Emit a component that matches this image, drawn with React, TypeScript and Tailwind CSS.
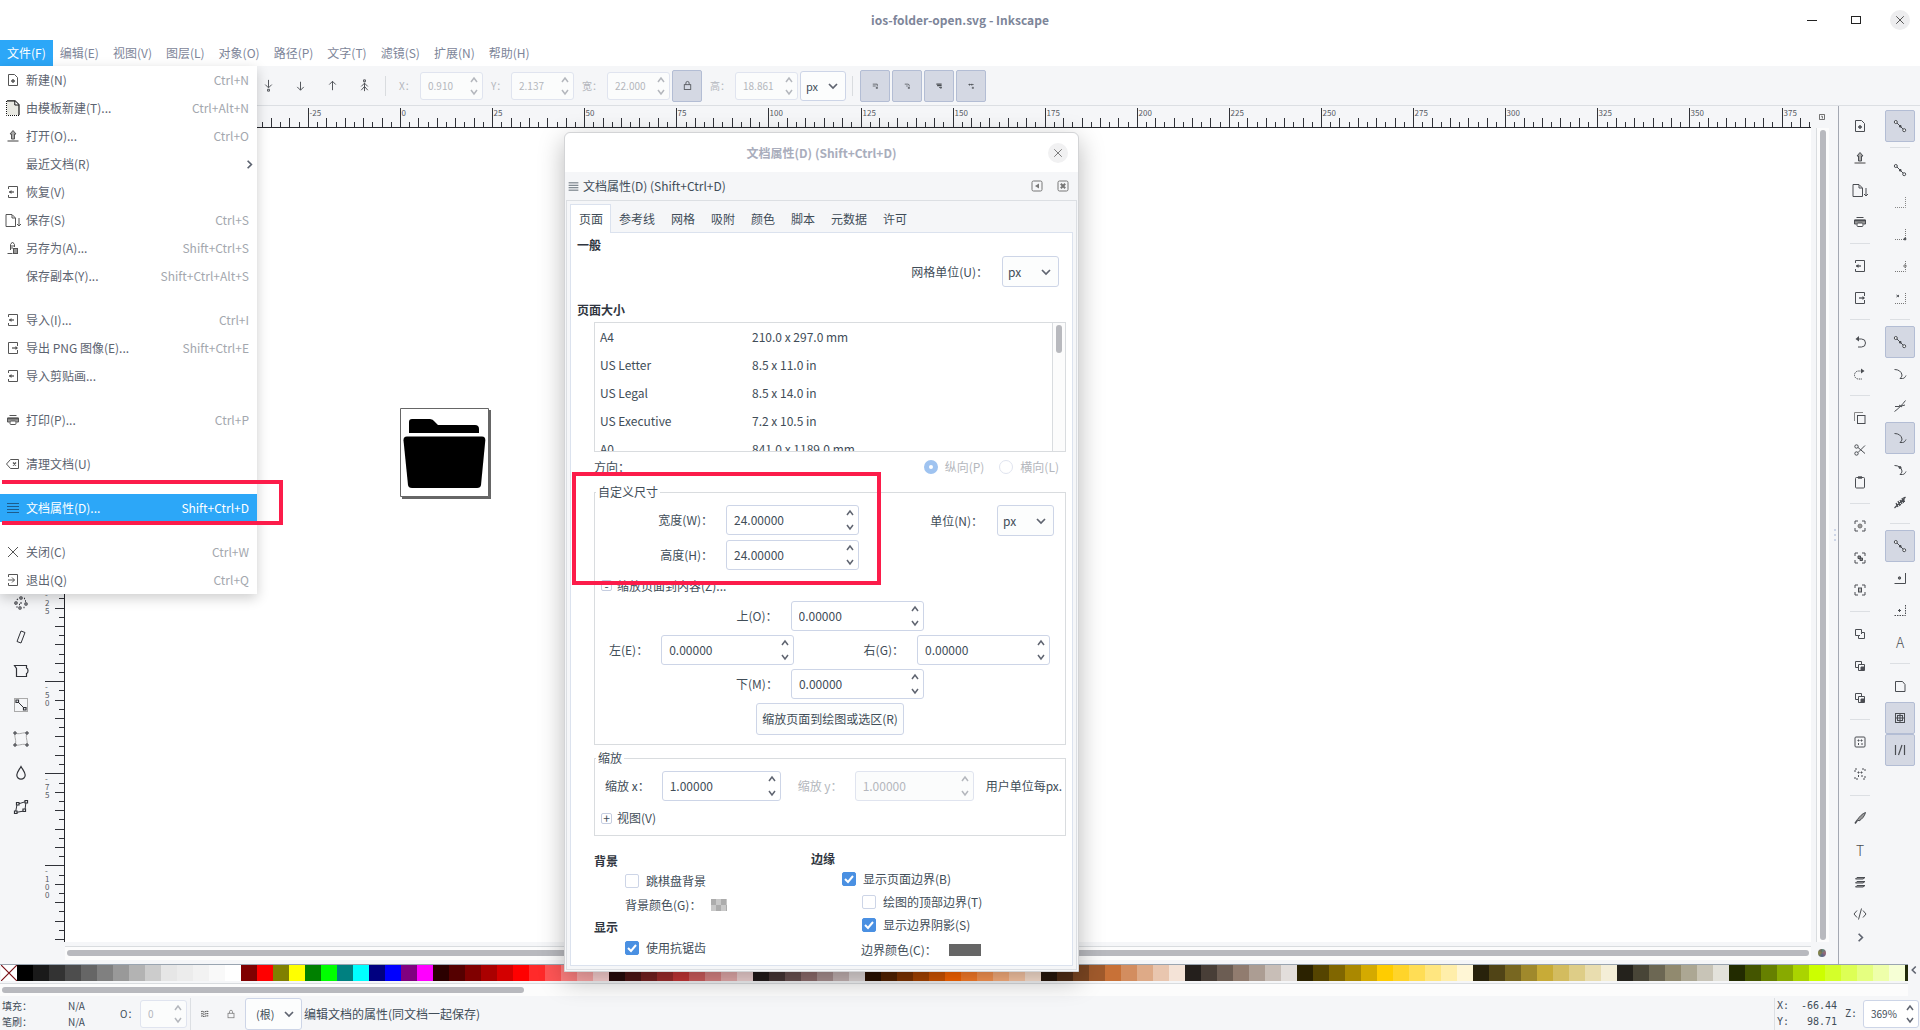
import React from "react";

import { clsx } from 'clsx';

type IconProps = { name: string; className?: string };

// all glyphs live on a 16x16 grid and inherit the text colour
const icons: Record<string, React.ReactNode> = {
    newDoc: <><path d="M3.5 2.5h6l3 3v8h-9z" /><path d="M8 7v4M6 9h4" strokeWidth="1.4" /></>,
    template: <><path d="M2 1h8l4 4v10H2z" fill="#e9e9e2" stroke="none" /><path d="M2 .8h8l4 4V15" stroke="#111" strokeWidth="1.2" /><path d="M9.8 1v4h4" fill="#fff" stroke="#111" /><path d="M1.5 1v14.500h13" stroke="#111" strokeDasharray="1 1" /></>,
    open: <><path d="M8 2.5l3 3.5H9.5v5h-3V6H5z" fill="#aaa" /><path d="M2.5 13h11" strokeWidth="1.6" stroke="#888" /></>,
    save: <><path d="M1 2.5h6l3.5 3.5v8.5H1z" /><path d="M7 3v3h3M14 6v8M12 12l2 2 2-2" /></>,
    saveAs: <><path d="M7.5 2l-2 2.5V10M7.5 2l2 2.5V7M2.5 13.5h5" /><rect x="8.5" y="8.5" width="4" height="5" fill="#999" /><path d="M6 6h3M6 8h2" /></>,
    print: <><path d="M4.5 3.5h7" /><path d="M4.5 10h-2V6h11v4h-2" fill="#999" /><path d="M2.5 6.5h11" strokeWidth="1.6" /><rect x="5" y="9" width="6" height="3.5" rx="1" fill="#fff" /></>,
    importIn: <><path d="M3.5 5V2.5h9v11h-9V11" /><path d="M4 8h5" strokeWidth="1.3" /><path d="M6.5 6L4 8l2.5 2z" fill="currentColor" stroke="none" /></>,
    exportOut: <><path d="M12.5 6V2.5h-9v11h9V10" /><path d="M7 8h5" strokeWidth="1.3" /><path d="M10.500 6l2.500 2-2.500 2z" fill="currentColor" stroke="none" /></>,
    clean: <><path d="M5.5 3.5h8v9h-8L1.500 8z" /><path d="M8 6.5l3 3M11 6.5l-3 3" strokeWidth="1.3" /></>,
    lines: <path d="M2 3.5h12M2 6.5h12M2 9.5h12M2 12.5h12" />,
    close: <path d="M3 3l10 10M13 3L3 13" />,
    quit: <><path d="M3.5 5V2.5h9v11h-9V11" /><path d="M3 8h6.500M7 5.500L9.500 8 7 10.500" /></>,
    undo: <><path d="M6 5h3.500a4 4 0 0 1 0 8H6" /><path d="M7 2L3.500 5 7 7.500z" fill="currentColor" stroke="none" /></>,
    redo: <><path d="M10 5H6.500a4 4 0 0 0 0 8H10" strokeDasharray="1.5 .8" /><path d="M9 2.500L12.500 5 9 7.500z" fill="currentColor" stroke="none" /></>,
    copy: <><path d="M2.5 11V2.5H11" stroke="#888" /><rect x="5.5" y="5.5" width="7.5" height="8" /></>,
    cut: <><circle cx="4.5" cy="4.5" r="1.7" /><circle cx="4.5" cy="11.5" r="1.7" /><path d="M6 5.5l7 6M6 10.5l7-7" /></>,
    paste: <><rect x="3.5" y="3.5" width="9" height="10.5" rx="1" /><path d="M6 3.5h4" strokeWidth="2.4" /></>,
    zoomSel: <><path d="M3 6V3h3M10 3h3v3M13 10v3h-3M6 13H3v-3" /><circle cx="8" cy="8" r="2" fill="#999" stroke="#777" /></>,
    zoomDraw: <><path d="M3 6V3h3M10 3h3v3M13 10v3h-3M6 13H3v-3" /><path d="M6 6h2.5v2.5H6zM8 8h2.5v2.5H8z" fill="#888" /></>,
    zoomPage: <><path d="M3 6V3h3M10 3h3v3M13 10v3h-3M6 13H3v-3" /><rect x="6.5" y="6" width="3" height="4" fill="#bbb" /></>,
    duplicate: <path d="M3.5 3.5h6v3h3v6h-6v-3h-3zM9.5 6.5v1.500M6.500 9.500h1.500" />,
    clone: <><path d="M9.5 6V3.5h-6v6H6" /><path d="M6.5 6.5h6v6h-6z" /><path d="M9 9h3v3H9z" fill="currentColor" /></>,
    group: <><rect x="3" y="3" width="10" height="10" rx="1" /><path d="M6 6h1v1H6zM9 6h1v1H9zM6.500 9v2M9 10h2" /></>,
    ungroup: <><path d="M3 6V3h3M10 3h3v3M13 10v3h-3M6 13H3v-3" strokeDasharray="2 1" /><path d="M6 6h1v1H6zM9 6h1v1H9zM6.500 9v2M9 10h2" /></>,
    pen: <><path d="M13.5 2.5c-3 1-6 4-8 7L7 11c3-2 5.500-4.500 6.500-8.500z" fill="#999" /><path d="M5.5 10L3 13.500" strokeWidth="1.6" /></>,
    layers: <path d="M5 3.5h8l-2 1.5H3.500zM5 7.500h8l-2 1.500H3.500zM5 11.500h8l-2 1.500H3.500z" fill="#aaa" />,
    code: <path d="M5 4.500L2 8l3 3.500M11 4.500L14 8l-3 3.500M9.500 2.500l-3 11" />,
    chevronRight: <path d="M6 4l4 4-4 4" strokeWidth="1.8" />,
    chevronLeft: <path d="M10 4L6 8l4 4" strokeWidth="1.8" />,
    snap: <><path d="M4 4l8 8" /><circle cx="3.8" cy="4" r="1.5" fill="#f5f6f8" /><circle cx="12.2" cy="12.2" r="1.5" fill="#f5f6f8" /><path d="M7.500 7.500H9V9H7.500z" fill="currentColor" /></>,
    snapEdge: <path d="M13.5 3v10.500H2.500" strokeDasharray="1 1" stroke="#888" />,
    snapCorner: <><path d="M13.5 3v10.500H2.500" strokeDasharray="1 1" stroke="#777" /><circle cx="13" cy="13" r="1" fill="currentColor" /></>,
    snapMid: <><path d="M13.5 3v10.500H2.500" strokeDasharray="1 1" stroke="#777" /><circle cx="13" cy="8" r="1.2" stroke="#777" /></>,
    snapCenter: <><path d="M13.5 3v10.500H2.500" strokeDasharray="1 1" stroke="#777" /><path d="M4.500 5l2.500 2M7 5L4.500 7" /></>,
    snapPath: <path d="M2.5 3.5c4 0 7 2 7.5 5.5 0 1.5-1 2.5-2 3.500h2.500c2 0 3-2 3.500-3" />,
    snapCross: <path d="M2.5 13.500c3-2 8-7 11-11M3 8.500h4.500L13 7M7 7l3 2" />,
    snapSmooth: <><path d="M2.5 3.5c4 0 7 2 7.5 5.5 0 1.5-1 2.5-2 3.500h2.500c2 0 3-2 3.500-3" /><circle cx="8" cy="5.5" r="1" fill="currentColor" /></>,
    snapHatch: <path d="M2.5 14l11-11M4 9l2 4M6 7l2 5M8 6l2 4M10 4l1.500 5M12 3v4M4 10.500h5M8 7.500h5" strokeWidth="1.2" />,
    snapObj: <><path d="M13.5 3v10.500H2.500" /><circle cx="7.5" cy="8" r="1.2" fill="#777" /></>,
    snapRot: <><path d="M13.5 3v10.500H2.500" strokeDasharray="1.5 1" /><path d="M7.500 7v3M6 8.500h3" /></>,
    snapPage: <path d="M3.5 3.5h7l2.500 3v7H3.500z" />,
    snapGrid: <path d="M3.5 3v10M8 3v10M12.500 3v10M3 3.500h10M3 8h10M3 12.500h10M5.500 5v6M10.500 5v6M5 5.500h6M5 10.500h6" />,
    snapGuide: <path d="M3.5 3v10M12.500 3v10M10 3L6.500 13" strokeWidth="1.2" />,
    lower: <path d="M8 2v8M4.500 7L8 10.500 11.500 7M7 12h2v2H7z" />,
    down: <path d="M8 4v9M4.500 9.500L8 13l3.500-3.500" />,
    up: <path d="M8 13V3.500M4.500 7L8 3.500 11.500 7" />,
    raise: <path d="M8 14V5M4.500 9L8 5.500 11.500 9M7 2h2v2H7zM4.500 13L8 9l3.500 4" />,
    lock: <><rect x="4" y="7" width="8" height="6" /><path d="M6 7V5a2 2 0 0 1 4 0v2" /></>,
    affectA: <path d="M5 5.5h6v3M5 8h4M9 10.500h3M10.500 9v3" />,
    affectB: <path d="M5 5.5h4a2 2 0 0 1 2 2v1M7 8h2M9 10.500h3M10.500 9v3" />,
    affectC: <><path d="M4.5 5.500h7M5.500 7.500h6" strokeWidth="1.8" /><path d="M8 10h4M10.500 9v3" /></>,
    affectD: <path d="M4.500 6h7M6 5v2.500M9 5v2.500M9 10.500h3M10.500 9v3" />,
    spray: <g strokeWidth="1.1"><circle cx="8" cy="3" r="1.2" /><circle cx="3" cy="8" r="1.2" /><circle cx="13" cy="9" r="1.2" /><circle cx="7" cy="13" r="1.2" /><path d="M4 4l.8.8M11 3.500h1M12 6h1M7.500 7.500l1 1M4 11.500v1M10.500 12.500h1M6 9.500h1" strokeWidth="1.5" /></g>,
    eraser: <path d="M8 2l4 1.500-4 10.500-4-1.500z" />,
    bucket: <path d="M1.500 2.500h12v2.500c2 .5 2 5 0 5.500v3h-10V5.500z" strokeWidth="1.2" />,
    gradient: <><rect x="1.5" y="1.5" width="13" height="13" stroke="#aaa" /><path d="M4 4l8 8" /><path d="M3 3h2.500v2.500H3zM10.500 10.500H13V13h-2.500z" fill="#f5f6f8" strokeWidth="1.2" /></>,
    mesh: <><path d="M2 2c4 2 8-1 12 0-2 4 1 8 0 12-4-2-8 1-12 0 2-4-1-8 0-12z" stroke="#aaa" /><path d="M1 1h2v2H1zM13 1h2v2h-2zM1 13h2v2H1zM13 13h2v2h-2z" fill="#f5f6f8" /></>,
    drop: <path d="M8 1.500C6 5 3.800 7.500 3.800 10a4.200 4.200 0 0 0 8.400 0C12.200 7.500 10 5 8 1.500z" strokeWidth="1.2" />,
    connector: <><path d="M4 5.500L2.500 13.500 11 12M5 5l8-2.500L12 11" /><path d="M3.500 3.500H6V6H3.500zM12 1.500h2.500V4H12zM1.500 12H4v2.500H1.500zM10 10h2.500v2.500H10z" fill="#f5f6f8" strokeWidth="1.2" /></>,
    layerEye: <path d="M3 5c2-1.500 3 1 5 0s3-1 5 0M3 8c2-1.500 3 1 5 0s3-1 5 0M3 11c2-1.500 3 1 5 0s3-1 5 0" strokeWidth="1.4" strokeDasharray="2 .6" />,
    dockLeft: <><rect x="3" y="3" width="10" height="10" rx="1.5" /><path d="M10 5.500v5L6 8z" fill="currentColor" stroke="none" /></>,
    dockClose: <><rect x="3" y="3" width="10" height="10" rx="1.5" /><path d="M5.800 5.800l4.400 4.400M10.200 5.800l-4.400 4.400" strokeWidth="2" /></>,
};

const Icon: React.FC<IconProps> = ({ name, className }) => (
    <svg viewBox="0 0 16 16" fill="none" stroke="currentColor" className={clsx('shrink-0', className || 'size-4')} aria-hidden="true">
        {icons[name]}
    </svg>
);

const Arrows: React.FC<{ label: string; disabled?: boolean }> = ({ label, disabled }) => (
    <span className={clsx('flex w-3 shrink-0 flex-col justify-between py-[3px]', disabled ? 'text-[#b4b7bd]' : 'text-[#5f6470]')}>
        <button type="button" aria-label={`${label} +`} disabled={disabled}>
            <svg viewBox="0 0 8 8" className="size-2" fill="none" stroke="currentColor" strokeWidth="1.5"><path d="M1 6l3-4 3 4" /></svg>
        </button>
        <button type="button" aria-label={`${label} -`} disabled={disabled}>
            <svg viewBox="0 0 8 8" className="size-2" fill="none" stroke="currentColor" strokeWidth="1.5"><path d="M1 2l3 4 3-4" /></svg>
        </button>
    </span>
);

type SpinProps = { id: string; label: string; value: string; className: string; disabled?: boolean };

const Spin: React.FC<SpinProps> = ({ id, label, value, className, disabled }) => (
    <span className={clsx('flex shrink-0 rounded-[3px] border', disabled ? 'border-[#e0e4ef] bg-[#fbfcfc] text-[#b4b7bd]' : 'border-[#cdd5e7] bg-white text-[#414d58]', className)}>
        <input id={id} type="text" defaultValue={value} disabled={disabled} className="w-full min-w-0 flex-1 bg-transparent pl-[7px] outline-none" />
        <Arrows label={label} disabled={disabled} />
    </span>
);

const Select: React.FC<{ id: string; label?: string; value: string; className: string; pad?: string }> = ({ id, label, value, className, pad }) => (
    <span className={clsx('relative flex shrink-0', className)}>
        <select id={id} aria-label={label} className={clsx('w-full appearance-none rounded-[3px] border border-[#cdd5e7] bg-[#fcfdfd] text-[#414d58] outline-none', pad || 'pl-[5px]')}>
            <option>{value}</option>
        </select>
        <svg viewBox="0 0 10 10" className="pointer-events-none absolute inset-y-0 right-2 my-auto size-[10px] text-[#5f6470]" fill="none" stroke="currentColor" strokeWidth="1.7"><path d="M1 3l4 4 4-4" /></svg>
    </span>
);

const Check: React.FC<{ id: string; label: string; checked?: boolean }> = ({ id, label, checked }) => (
    <span className="flex items-center">
        <span className="relative flex">
            <input id={id} type="checkbox" defaultChecked={checked} className="size-[14px] appearance-none rounded-[2px] border border-[#cdd5e7] bg-white checked:border-[#4a90e2] checked:bg-[#4a90e2]" />
            {checked && <svg viewBox="0 0 14 14" className="pointer-events-none absolute inset-0 size-[14px]" fill="none" stroke="#fff" strokeWidth="2"><path d="M3 7l3 3 5-6" /></svg>}
        </span>
        <label htmlFor={id} className="pl-[7px]">{label}</label>
    </span>
);

const menus = ['文件(F)', '编辑(E)', '视图(V)', '图层(L)', '对象(O)', '路径(P)', '文字(T)', '滤镜(S)', '扩展(N)', '帮助(H)'];

const fileMenu: { icon?: string; text: string; keys?: string; active?: boolean; sub?: boolean }[][] = [
    [
        { icon: 'newDoc', text: '新建(N)', keys: 'Ctrl+N' },
        { icon: 'template', text: '由模板新建(T)...', keys: 'Ctrl+Alt+N' },
        { icon: 'open', text: '打开(O)...', keys: 'Ctrl+O' },
        { text: '最近文档(R)', sub: true },
        { icon: 'importIn', text: '恢复(V)' },
        { icon: 'save', text: '保存(S)', keys: 'Ctrl+S' },
        { icon: 'saveAs', text: '另存为(A)...', keys: 'Shift+Ctrl+S' },
        { text: '保存副本(Y)...', keys: 'Shift+Ctrl+Alt+S' },
    ],
    [
        { icon: 'importIn', text: '导入(I)...', keys: 'Ctrl+I' },
        { icon: 'exportOut', text: '导出 PNG 图像(E)...', keys: 'Shift+Ctrl+E' },
        { icon: 'importIn', text: '导入剪贴画...' },
    ],
    [{ icon: 'print', text: '打印(P)...', keys: 'Ctrl+P' }],
    [{ icon: 'clean', text: '清理文档(U)' }],
    [{ icon: 'lines', text: '文档属性(D)...', keys: 'Shift+Ctrl+D', active: true }],
    [
        { icon: 'close', text: '关闭(C)', keys: 'Ctrl+W' },
        { icon: 'quit', text: '退出(Q)', keys: 'Ctrl+Q' },
    ],
];

const FileMenu: React.FC = () => (
    <div role="menu" className="absolute top-full left-0 z-20 flex w-[257px] flex-col gap-4 bg-white shadow-[0_4px_12px_rgba(0,0,0,0.2)]">
        {fileMenu.map((group, i) => (
            <div key={i}>
                {group.map((item) => (
                    <button
                        key={item.text}
                        type="button"
                        role="menuitem"
                        className={clsx('flex h-7 w-full items-center pr-2 pl-[5px]', item.active ? 'bg-[#2ca7f8] text-white' : 'text-[#5c6370]')}
                    >
                        <span className={clsx('w-[21px]', item.active ? 'text-[#1d5c8c]' : 'text-[#555]')}>
                            {item.icon && <Icon name={item.icon} />}
                        </span>
                        <span>{item.text}</span>
                        {item.keys && <span className={clsx('ml-auto', item.active ? 'text-white' : 'text-[#a3a7ae]')}>{item.keys}</span>}
                        {item.sub && <Icon name="chevronRight" className="-mr-2 ml-auto size-[15px]" />}
                    </button>
                ))}
            </div>
        ))}
    </div>
);

// one ruler tick is 2.5 user units
const STEP = 9.21;

const range = (from: number, to: number) => Array.from({ length: to - from + 1 }, (_, i) => from + i);

const TopRuler: React.FC = () => (
    <svg className="h-[22px] w-full" aria-label="水平标尺">
        {range(-16, 153).map((n) => {
            const x = Math.round(359 + n * STEP) + 0.5;
            const top = n % 10 === 0 ? 2 : n % 2 === 0 ? 12 : 16;
            return (
                <g key={n}>
                    <path d={`M${x} ${top}V21`} stroke="#303238" />
                    {n % 10 === 0 && <text x={x + 1} y="10" fill="#555a63" className="text-[8px]">{n * 2.5}</text>}
                </g>
            );
        })}
        <path d="M0 21.5H4000" stroke="#25272c" />
    </svg>
);

const SideRuler: React.FC = () => (
    <svg className="h-full w-6 shrink-0" aria-label="垂直标尺">
        {range(8, 48).map((n) => {
            const y = Math.round(369 + n * STEP) + 0.5;
            const left = n % 10 === 0 ? 4 : n % 2 === 0 ? 14 : 18;
            const label = n % 10 === 0 ? String(n * -2.5) : '';
            return (
                <g key={n}>
                    <path d={`M${left} ${y}H23`} stroke="#303238" />
                    {label.split('').map((c, i) => (
                        <text key={i} x="4" y={y + 8 + i * 8} fill="#555a63" className="text-[8px]">{c}</text>
                    ))}
                </g>
            );
        })}
        <path d="M23.5 0V4000" stroke="#25272c" />
    </svg>
);

const palette = (
    '000000 1a1a1a 333333 4d4d4d 666666 808080 999999 b3b3b3 cccccc e6e6e6 ececec f2f2f2 f9f9f9 ffffff ' +
    '800000 ff0000 808000 ffff00 008000 00ff00 008080 00ffff 000080 0000ff 800080 ff00ff ' +
    '2b0000 550000 800000 aa0000 d40000 ff0000 ff2a2a ff5555 ff8080 ffaaaa ffd5d5 ' +
    '280b0b 501616 782121 a02c2c c83737 d35f5f de8787 e9afaf f4d7d7 ' +
    '241c1c 483737 6c5353 916f6f ac9393 c8b7b7 e3dbdb ' +
    '2b1100 552200 803300 aa4400 d45500 ff6600 ff7f2a ff9955 ffb380 ffccaa ffe6d5 ' +
    '28170b 502d16 784421 a05a2c c87137 d38d5f deaa87 e9c6af f4e3d7 ' +
    '241f1c 483e37 6c5d53 917c6f ac9d93 c8beb7 e3dedb ' +
    '2b2200 554400 806600 aa8800 d4aa00 ffcc00 ffd42a ffdd55 ffe680 ffeeaa fff6d5 ' +
    '28220b 504416 786721 a0892c c8ab37 d3bc5f decd87 e9ddaf f4eed7 ' +
    '24221c 484537 6c6753 918a6f aca793 c8c4b7 e3e2db ' +
    '222b00 445500 668000 88aa00 aad400 ccff00 d4ff2a ddff55 e5ff80 eeffaa f6ffd5 222b0b'
).split(' ');

const commands = [
    ['newDoc', 'open', 'save', 'print'],
    ['importIn', 'exportOut'],
    ['undo', 'redo'],
    ['copy', 'cut', 'paste'],
    ['zoomSel', 'zoomDraw', 'zoomPage'],
    ['duplicate', 'clone', 'clone'],
    ['group', 'ungroup'],
    ['pen', 'T', 'layers', 'code'],
];

// a leading * marks a switched-on snap option
const snaps = [
    ['*snap'],
    ['snap', 'snapEdge', 'snapCorner', 'snapMid', 'snapCenter'],
    ['*snap', 'snapPath', 'snapCross', '*snapPath', 'snapSmooth', 'snapHatch'],
    ['*snap', 'snapObj', 'snapRot', 'A'],
    ['snapPage', '*snapGrid', '*snapGuide'],
];

const ToolColumn: React.FC<{ groups: string[][]; label: string }> = ({ groups, label }) => (
    <div role="toolbar" aria-label={label} className="flex w-[30px] flex-col text-[#4a4d52]">
        {groups.map((group, i) => (
            <React.Fragment key={i}>
                {i > 0 && <div className="mx-[5px] my-[5px] h-[2px] shrink-0 border-t border-[#dcdfe3]" />}
                {group.map((entry, k) => {
                    const on = entry.startsWith('*');
                    const name = entry.replace('*', '');
                    return (
                        <button
                            key={k}
                            type="button"
                            aria-label={name}
                            className={clsx('flex h-8 shrink-0 items-center justify-center rounded-[2px] border', on ? 'border-[#b3bdd4] bg-[#d4d8e3]' : 'border-transparent')}
                        >
                            {name.length === 1 ? <span className="text-[14px] font-light">{name}</span> : <Icon name={name} />}
                        </button>
                    );
                })}
            </React.Fragment>
        ))}
    </div>
);

const pageSizes = [
    ['A4', '210.0 x 297.0 mm'],
    ['US Letter', '8.5 x 11.0 in'],
    ['US Legal', '8.5 x 14.0 in'],
    ['US Executive', '7.2 x 10.5 in'],
    ['A0', '841.0 x 1189.0 mm'],
];

const tabs = ['参考线', '网格', '吸附', '颜色', '脚本', '元数据', '许可'];

const DocumentProperties: React.FC = () => (
    <section role="dialog" aria-labelledby="dialog-title" className="absolute top-[132px] left-[564px] z-10 flex w-[515px] flex-col rounded-t-[6px] border border-[#d3d4d6] bg-[#f5f6f8] text-[#414d58] shadow-[0_8px_26px_rgba(0,0,0,0.28)]">
        <header className="relative flex h-[39px] items-center justify-center rounded-t-[6px] bg-white">
            <h2 id="dialog-title" className="text-[12px] font-bold text-[#a9adbc]">文档属性(D) (Shift+Ctrl+D)</h2>
            <button type="button" aria-label="关闭" className="absolute right-[10px] flex size-5 items-center justify-center rounded-full bg-[#f1f1f2] text-[#555]">
                <Icon name="close" className="size-3" />
            </button>
        </header>
        <div className="flex h-7 items-center pr-[7px] pl-[2px]">
            <Icon name="lines" className="size-[13px]" />
            <span className="pl-[3px]">文档属性(D) (Shift+Ctrl+D)</span>
            <button type="button" aria-label="停靠" className="mr-[10px] ml-auto text-[#777]"><Icon name="dockLeft" /></button>
            <button type="button" aria-label="关闭面板" className="text-[#777]"><Icon name="dockClose" /></button>
        </div>
        <div className="mx-px mb-px border border-[#dcdfe3] px-[3px] pt-[3px] pb-[3px]">
            <div role="tablist" className="relative z-10 -mb-px flex h-[29px] items-center">
                <button type="button" role="tab" aria-selected="true" className="h-full border border-b-0 border-[#dbe2ee] bg-white pr-[7px] pl-2">页面</button>
                {tabs.map((tab) => <button key={tab} type="button" role="tab" aria-selected="false" className="px-2">{tab}</button>)}
            </div>
            <div role="tabpanel" className="h-[734px] border border-[#dbe2ee] bg-white">
                <h3 className="h-[23px] pl-[6px] leading-6 font-bold text-[#303640]">一般</h3>
                <div className="flex h-[31px] items-stretch justify-end pr-[13px]">
                    <label htmlFor="grid-unit" className="self-center pr-[14px]">网格单位(U)：</label>
                    <Select id="grid-unit" value="px" className="w-[57px]" />
                </div>
                <h3 className="mt-[11px] h-6 pl-[6px] leading-6 font-bold text-[#303640]">页面大小</h3>
                <div className="pr-[6px] pl-[23px]">
                    <div className="flex h-[130px] overflow-hidden border border-[#d9dcdf]">
                        <table className="flex-1 self-start">
                            <tbody>
                                {pageSizes.map(([name, size]) => (
                                    <tr key={name} className="h-7">
                                        <td className="w-[157px] pl-[5px]">{name}</td>
                                        <td>{size}</td>
                                    </tr>
                                ))}
                            </tbody>
                        </table>
                        <div className="w-[13px] border-l border-[#d9dcdf] bg-[#fcfcfc] px-[3px] py-[2px]">
                            <div className="h-7 rounded-full bg-[#b8b9be]" />
                        </div>
                    </div>
                    <div className="flex h-[30px] items-center pr-[7px]">
                        <span className="mr-auto">方向：</span>
                        <input id="portrait" type="radio" name="orientation" defaultChecked disabled className="size-[14px] appearance-none rounded-full border-[5px] border-[#9fc3f0] bg-white" />
                        <label htmlFor="portrait" className="pr-[15px] pl-[7px] text-[#b4b7bd]">纵向(P)</label>
                        <input id="landscape" type="radio" name="orientation" disabled className="size-[14px] appearance-none rounded-full border border-[#e0e4ef] bg-white" />
                        <label htmlFor="landscape" className="pl-[7px] text-[#b4b7bd]">横向(L)</label>
                    </div>
                    <fieldset className="border border-[#d9dcdf] pt-[3px] pb-[9px]">
                        <legend className="ml-px px-[2px] leading-[20px]">自定义尺寸</legend>
                        <div className="flex items-start">
                            <div className="flex flex-col gap-[5px]">
                                <div className="flex h-[30px] items-stretch">
                                    <label htmlFor="page-w" className="w-[118px] self-center text-right">宽度(W)：</label>
                                    <Spin id="page-w" label="宽度" value="24.00000" className="ml-[13px] w-[133px]" />
                                </div>
                                <div className="flex h-[30px] items-stretch">
                                    <label htmlFor="page-h" className="w-[118px] self-center text-right">高度(H)：</label>
                                    <Spin id="page-h" label="高度" value="24.00000" className="ml-[13px] w-[133px]" />
                                </div>
                            </div>
                            <div className="ml-auto flex h-[31px] items-stretch pr-[11px]">
                                <label htmlFor="page-unit" className="self-center pr-[14px]">单位(N)：</label>
                                <Select id="page-unit" value="px" className="w-[57px]" />
                            </div>
                        </div>
                        <button type="button" aria-expanded="true" className="flex h-[31px] items-center gap-[5px] pl-[6px]">
                            <span className="flex size-[11px] items-center justify-center rounded-[2px] border border-[#c5cde0] leading-none">-</span>
                            缩放页面到内容(Z)...
                        </button>
                        <div className="flex flex-col items-center gap-1">
                            <div className="flex h-[30px] items-stretch">
                                <label htmlFor="m-top" className="self-center pr-[13px]">上(O)：</label>
                                <Spin id="m-top" label="上" value="0.00000" className="w-[133px]" />
                            </div>
                            <div className="flex h-[30px] w-full items-stretch pr-[15px] pl-[14px]">
                                <label htmlFor="m-left" className="self-center pr-[13px]">左(E)：</label>
                                <Spin id="m-left" label="左" value="0.00000" className="w-[133px]" />
                                <label htmlFor="m-right" className="ml-auto self-center pr-[13px]">右(G)：</label>
                                <Spin id="m-right" label="右" value="0.00000" className="w-[133px]" />
                            </div>
                            <div className="flex h-[30px] items-stretch">
                                <label htmlFor="m-bottom" className="self-center pr-[13px]">下(M)：</label>
                                <Spin id="m-bottom" label="下" value="0.00000" className="w-[133px]" />
                            </div>
                            <button type="button" className="h-8 rounded-[3px] border border-[#cdd5e7] bg-[#fcfdfd] px-[5px]">缩放页面到绘图或选区(R)</button>
                        </div>
                    </fieldset>
                    <fieldset className="mt-[3px] border border-[#d9dcdf] pt-[3px]">
                        <legend className="ml-px px-[2px] leading-[20px]">缩放</legend>
                        <div className="flex h-[30px] items-stretch gap-3 pl-[10px] whitespace-nowrap">
                            <label htmlFor="scale-x" className="self-center">缩放 x：</label>
                            <Spin id="scale-x" label="缩放 x" value="1.00000" className="w-[119px]" />
                            <label htmlFor="scale-y" className="ml-[5px] self-center text-[#b4b7bd]">缩放 y：</label>
                            <Spin id="scale-y" label="缩放 y" value="1.00000" className="w-[119px]" disabled />
                            <span className="self-center">用户单位每px.</span>
                        </div>
                        <button type="button" aria-expanded="false" className="flex h-[34px] items-center gap-[5px] pl-[6px]">
                            <span className="flex size-[11px] items-center justify-center rounded-[2px] border border-[#c5cde0] leading-none">+</span>
                            视图(V)
                        </button>
                    </fieldset>
                    <div className="flex">
                        <div className="w-[217px] pt-[15px]">
                            <h3 className="h-5 leading-5 font-bold text-[#303640]">背景</h3>
                            <div className="flex h-5 items-center pl-[31px]"><Check id="checker" label="跳棋盘背景" /></div>
                            <div className="flex h-7 items-center pl-[31px]">
                                背景颜色(G)：
                                <button type="button" aria-label="背景颜色" className="ml-[10px] h-3 w-4 bg-[conic-gradient(#c8c8c8_25%,#acacac_0_50%,#c8c8c8_0_75%,#acacac_0)] bg-[length:10px_12px]" />
                            </div>
                            <h3 className="h-4 leading-4 font-bold text-[#303640]">显示</h3>
                            <div className="flex h-[26px] items-center pl-[31px]"><Check id="antialias" label="使用抗锯齿" checked /></div>
                        </div>
                        <div className="flex-1 pt-[13px]">
                            <h3 className="h-5 leading-5 font-bold text-[#303640]">边缘</h3>
                            <div className="flex h-5 items-center pl-[31px]"><Check id="border" label="显示页面边界(B)" checked /></div>
                            <div className="flex h-[26px] items-center pl-[51px]"><Check id="border-top" label="绘图的顶部边界(T)" /></div>
                            <div className="flex h-5 items-center pl-[51px]"><Check id="border-shadow" label="显示边界阴影(S)" checked /></div>
                            <div className="flex h-[30px] items-center pl-[50px]">
                                边界颜色(C)：
                                <button type="button" aria-label="边界颜色" className="ml-3 h-3 w-8 bg-[#666]" />
                            </div>
                        </div>
                    </div>
                </div>
            </div>
        </div>
    </section>
);

const toggle = 'flex items-center justify-center rounded-[2px] border border-[#b3bdd4] bg-[#d4d8e3] text-[#4a4d52]';

const App: React.FC = () => {

    return (
        <div className="relative flex h-screen flex-col overflow-hidden bg-[#f5f6f8] font-['Noto_Sans_CJK_SC',sans-serif] text-[12px] leading-4 text-[#414d58]">
            <header className="relative flex h-10 shrink-0 items-center justify-center bg-white">
                <h1 className="text-[12px] font-bold text-[#7d8599]">ios-folder-open.svg - Inkscape</h1>
                <div className="absolute right-[10px] flex items-center gap-6 text-[#222]">
                    <button type="button" aria-label="最小化" className="flex size-5 items-center justify-center"><span className="h-px w-[10px] bg-[#222]" /></button>
                    <button type="button" aria-label="最大化" className="flex size-5 items-center justify-center"><span className="h-2 w-[10px] border border-[#222]" /></button>
                    <button type="button" aria-label="关闭窗口" className="flex size-5 items-center justify-center rounded-full bg-[#ededef]"><Icon name="close" className="size-3" /></button>
                </div>
            </header>

            <nav className="relative flex h-[26px] shrink-0 bg-white">
                {menus.map((menu, i) => (
                    <button key={menu} type="button" className={clsx('px-[7px]', i === 0 ? 'bg-[#2ca7f8] text-white' : 'text-[#7d8599]')}>{menu}</button>
                ))}
                <FileMenu />
            </nav>

            <div role="toolbar" aria-label="工具控制栏" className="flex h-10 shrink-0 items-center border-b border-[#dcdfe3] pl-[252px] text-[10px] text-[#b4b7bd]">
                {['lower', 'down', 'up', 'raise'].map((name) => (
                    <button key={name} type="button" aria-label={name} className="flex h-8 w-8 items-center justify-center text-[#4a4d52]"><Icon name={name} className="size-[15px]" /></button>
                ))}
                <div className="mr-[13px] ml-[5px] h-5 w-px bg-[#d9dcdf]" />
                <label htmlFor="pos-x" className="w-[21px]">X：</label>
                <Spin id="pos-x" label="X" value="0.910" className="h-7 w-[63px]" disabled />
                <label htmlFor="pos-y" className="ml-2 w-[20px]">Y：</label>
                <Spin id="pos-y" label="Y" value="2.137" className="h-7 w-[63px]" disabled />
                <label htmlFor="size-w" className="ml-2 w-[25px]">宽：</label>
                <Spin id="size-w" label="宽" value="22.000" className="h-7 w-[63px]" disabled />
                <button type="button" aria-label="锁定比例" className={clsx(toggle, 'ml-[2px] h-8 w-[30px]')}><Icon name="lock" className="size-[13px]" /></button>
                <label htmlFor="size-h" className="ml-2 w-[25px]">高：</label>
                <Spin id="size-h" label="高" value="18.861" className="h-7 w-[63px]" disabled />
                <Select id="tool-unit" label="单位" value="px" className="ml-[2px] h-[30px] w-[46px] text-[11px]" />
                <div className="mr-[7px] ml-[6px] h-5 w-px bg-[#d9dcdf]" />
                <div className="flex gap-[2px]">
                    {['affectA', 'affectB', 'affectC', 'affectD'].map((name) => (
                        <button key={name} type="button" aria-label={name} className={clsx(toggle, 'h-8 w-[30px]')}><Icon name={name} className="size-3" /></button>
                    ))}
                </div>
            </div>

            <main className="flex min-h-0 flex-1">
                <div role="toolbar" aria-label="工具箱" className="flex w-[41px] shrink-0 flex-col items-center justify-end pb-[140px] text-[#303238]">
                    {['spray', 'eraser', 'bucket', 'gradient', 'mesh', 'drop', 'connector'].map((name) => (
                        <button key={name} type="button" aria-label={name} className="flex h-[34px] w-[34px] items-center justify-center"><Icon name={name} /></button>
                    ))}
                </div>
                <div className="flex min-w-0 flex-1 flex-col">
                    <TopRuler />
                    <div className="flex min-h-0 flex-1 overflow-hidden">
                        <SideRuler />
                        <div className="relative flex-1 bg-white">
                            {/* the page with its drop shadow */}
                            <svg viewBox="0 0 92 92" className="absolute top-[280px] left-[335px] size-[92px]">
                                <path d="M2 2h89v89H2z" fill="#666" />
                                <path d="M.5.5h88v88H.5z" fill="#fff" stroke="#666" />
                                <path d="M9 25V14q0-3 3-3h18q3 0 4.500 2.500L38 17h37q4 0 4 4v4z" />
                                <path d="M7 28.500h75q3.500 0 3.300 4L81 77q-.4 3-4 3H12q-3.600 0-4-3L3.500 32.500q-.2-4 3.500-4z" />
                            </svg>
                        </div>
                    </div>
                    <div className="ml-6 flex h-[22px] shrink-0 flex-col pt-1">
                        <div className="h-[14px] border-t border-[#d9dcdf] bg-[#fcfcfc] px-[2px] pt-[3px]">
                            <div className="h-[6px] rounded-full bg-[#b8b9be]" />
                        </div>
                    </div>
                </div>
                <div className="relative flex w-[27px] shrink-0 flex-col items-center pr-[5px] text-[#666]">
                    <svg viewBox="0 0 8 8" className="my-[8px] size-[6px] shrink-0" fill="none" stroke="currentColor" strokeWidth="1.3"><path d="M.6.6h6.800v6.800H.6zM3 3h1.500v3" /></svg>
                    <div className="w-[13px] flex-1 border-l border-[#d9dcdf] bg-[#fcfcfc] px-[3px] py-[2px]">
                        <div className="h-full rounded-full bg-[#b8b9be]" />
                    </div>
                    <div className="flex h-[22px] items-center"><span className="size-2 rounded-full bg-[conic-gradient(#587,#967,#568,#884,#666)]" /></div>
                    <div className="absolute inset-y-0 right-[2px] my-auto flex h-3 flex-col justify-between">
                        <span className="size-[2px] bg-[#cdd5e7]" />
                        <span className="size-[2px] bg-[#cdd5e7]" />
                        <span className="size-[2px] bg-[#cdd5e7]" />
                    </div>
                </div>
                <div className="flex w-[82px] shrink-0 border-l border-[#a4a8b2] pt-1 pr-[5px] pl-[6px]">
                    <div className="flex flex-1 justify-between">
                        <div className="flex flex-col items-center">
                            <ToolColumn groups={commands} label="命令栏" />
                            <button type="button" aria-label="更多" className="text-[#5f6470]"><Icon name="chevronRight" className="size-[15px]" /></button>
                        </div>
                        <ToolColumn groups={snaps} label="捕捉控制栏" />
                    </div>
                </div>
            </main>

            <div className="flex h-8 shrink-0">
                <div className="flex min-w-0 flex-1 flex-col">
                    <div className="flex h-[18px] overflow-hidden border-t border-[#9aa5b1] pl-px">
                        <button type="button" aria-label="无" className="h-4 w-4 shrink-0 bg-white">
                            <svg viewBox="0 0 16 16" className="size-4" stroke="#7a1016" strokeWidth="1.2"><path d="M0 0l16 16M16 0L0 16" /></svg>
                        </button>
                        {palette.map((color, i) => (
                            <button key={i} type="button" aria-label={`#${color}`} className="h-4 w-4 shrink-0" style={{ backgroundColor: `#${color}` }} />
                        ))}
                    </div>
                    <div className="mt-px h-[13px] border-t border-[#d9dcdf] bg-[#fcfcfc] px-[2px] pt-[3px]">
                        <div className="h-[6px] w-[522px] rounded-full bg-[#b8b9be]" />
                    </div>
                </div>
                <button type="button" aria-label="调色板" className="flex h-3 w-3 items-center justify-center text-[#5f6470]"><Icon name="chevronLeft" className="size-[14px]" /></button>
            </div>

            <footer className="flex h-[34px] shrink-0 items-center pt-[2px]">
                <dl className="grid w-[120px] grid-cols-[66px_1fr] pl-[2px] text-[10px]">
                    <dt>填充：</dt><dd>N/A</dd>
                    <dt>笔刷：</dt><dd>N/A</dd>
                </dl>
                <label htmlFor="opacity" className="w-5 text-[10px]">O：</label>
                <Spin id="opacity" label="O" value="0" className="h-7 w-[47px] text-[10px]" disabled />
                <div className="ml-[3px] h-8 w-px bg-[#dcdfe3]" />
                <button type="button" aria-label="图层可见" className="ml-2 text-[#555]"><Icon name="layerEye" className="size-3" /></button>
                <button type="button" aria-label="图层锁定" className="mr-2 ml-[14px] text-[#777]"><Icon name="lock" className="size-3" /></button>
                <Select id="layer" label="图层" value="(根)" className="h-8 w-[57px] text-[11px]" pad="pl-[10px]" />
                <p className="pl-[2px]">编辑文档的属性(同文档一起保存)</p>
                <div className="ml-auto h-8 w-px bg-[#dcdfe3]" />
                <dl className="grid w-[62px] grid-cols-[18px_1fr] pl-[2px] font-['DejaVu_Sans_Mono',monospace] text-[10px]">
                    <dt>X:</dt><dd className="text-right">-66.44</dd>
                    <dt>Y:</dt><dd className="text-right">98.71</dd>
                </dl>
                <label htmlFor="zoom" className="ml-2 w-[18px] font-['DejaVu_Sans_Mono',monospace] text-[10px]">Z:</label>
                <Spin id="zoom" label="Z" value="369%" className="mr-px h-7 w-[56px] text-[10px]" />
            </footer>

            <DocumentProperties />

            {/* highlight frames */}
            <div className="pointer-events-none absolute top-[480px] left-[2px] z-30 h-[45px] w-[281px] border-4 border-l-0 border-[#fc1c4a]" />
            <div className="pointer-events-none absolute top-[472px] left-[572px] z-30 h-[113px] w-[309px] border-4 border-[#fc1c4a]" />
        </div>
    );
};

export default App;
